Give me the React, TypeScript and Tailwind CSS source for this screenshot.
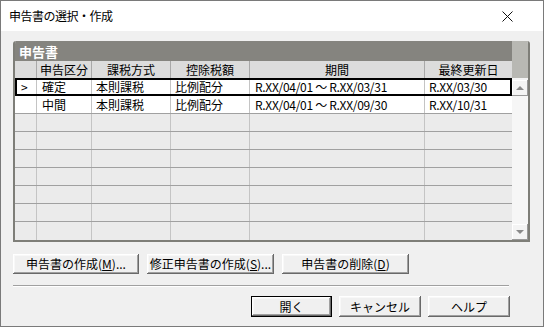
import React from 'react'

const font = { fontFamily: '"Noto Sans CJK JP", "Liberation Sans", sans-serif' }

const cols = 'grid grid-cols-[22px_55px_79px_79px_175px_87px]'

const rows = [
  { mark: '>', kind: '確定', method: '本則課税', deduct: '比例配分', period: 'R.XX/04/01 ～ R.XX/03/31', updated: 'R.XX/03/30', selected: true },
  { mark: '',  kind: '中間', method: '本則課税', deduct: '比例配分', period: 'R.XX/04/01 ～ R.XX/09/30', updated: 'R.XX/10/31', selected: false },
]

const btn =
  'h-full bg-[#f0f0f0] text-[12px] leading-none text-black shadow-[inset_-1px_-1px_#696969,inset_1px_1px_#ffffff,inset_-2px_-2px_#a0a0a0,inset_2px_2px_#f8f8f8]'

function Arrow({ up }: { up?: boolean }) {
  return (
    <div className="w-[16px] h-[16px] bg-[#f4f4f4] shadow-[inset_-1px_-1px_#9a9a9a,inset_1px_1px_#ffffff] flex items-center justify-center">
      <svg width="8" height="4" viewBox="0 0 8 4">
        <polygon points={up ? '0,4 8,4 4,0' : '0,0 8,0 4,4'} fill="#8a8a8a" />
      </svg>
    </div>
  )
}

export default function App() {
  const empty = Array.from({ length: 7 })

  return (
    <div className="w-[544px] h-[327px] border border-[#7a7a7a] bg-[#f0f0f0] flex flex-col" style={font}>
      {/* Title bar */}
      <div className="h-[30px] bg-white flex items-center justify-between pl-[8px] pr-[30px] flex-shrink-0">
        <span className="text-[12px] text-black tracking-[-0.5px]">申告書の選択・作成</span>
        <svg width="11" height="11" viewBox="0 0 11 11" fill="none">
          <path d="M0.5 0.5l10 10M10.5 0.5l-10 10" stroke="#111" strokeWidth="1" />
        </svg>
      </div>

      <div className="flex flex-col pl-[12px] pt-[10px]">
        {/* Grid panel */}
        <div className="w-[517px] h-[201px] flex rounded-t-[3px] overflow-hidden border-l-2 border-b-2 border-r-2 border-[#7e7e78]">
          <div className="w-[497px] flex flex-col">
            <div className="h-[20px] bg-[#85847f] flex items-center pl-[4px]">
              <span className="text-[13px] font-bold text-white leading-none">申告書</span>
            </div>
            <div className={`${cols} h-[17px] bg-[#dcdcdc] text-[12px] leading-[17px] text-black`}>
              {['', '申告区分', '課税方式', '控除税額', '期間', '最終更新日'].map((h, i) => (
                <div key={i} className="border-r border-[#a8a8a8] text-center last:border-r-0">{h}</div>
              ))}
            </div>
            {rows.map((r, i) => (
              <div
                key={i}
                className={`${cols} h-[18px] bg-white text-[12px] leading-[17px] text-black border-b border-[#a0a0a0] ${r.selected ? 'outline-2 outline-black -outline-offset-2' : ''}`}
              >
                <div className="border-r border-[#c4c4c4] pl-[6px]">{r.mark}</div>
                <div className="border-r border-[#c4c4c4] pl-[5px]">{r.kind}</div>
                <div className="border-r border-[#c4c4c4] pl-[4px]">{r.method}</div>
                <div className="border-r border-[#c4c4c4] pl-[4px]">{r.deduct}</div>
                <div className="border-r border-[#c4c4c4] pl-[5px] tracking-[-0.3px]">{r.period}</div>
                <div className="pl-[4px] tracking-[-0.3px]">{r.updated}</div>
              </div>
            ))}
            {empty.map((_, i) => (
              <div key={i} className={`${cols} h-[18px] bg-[#ebebeb] border-b border-[#a0a0a0] last:border-b-0`}>
                <div className="border-r border-[#c4c4c4]" />
                <div className="border-r border-[#c4c4c4]" />
                <div className="border-r border-[#c4c4c4]" />
                <div className="border-r border-[#c4c4c4]" />
                <div className="border-r border-[#c4c4c4]" />
                <div />
              </div>
            ))}
          </div>

          {/* Scrollbar */}
          <div className="w-[16px] flex flex-col">
            <div className="h-[37px] bg-[#b8b8b3]" />
            <div className="h-[2px] bg-[#f4f4f4]" />
            <Arrow up />
            <div className="flex-1 bg-[#f6f6f6]" />
            <Arrow />
          </div>
        </div>

        {/* Action buttons */}
        <div className="flex gap-[8px] mt-[12px] h-[20px]">
          <button className={`${btn} w-[126px]`}>申告書の作成(<u>M</u>)...</button>
          <button className={`${btn} w-[127px]`}>修正申告書の作成(<u>S</u>)...</button>
          <button className={`${btn} w-[127px]`}>申告書の削除(<u>D</u>)</button>
        </div>

        {/* Separator */}
        <div className="w-[496px] mt-[11px] border-t border-[#a0a0a0] border-b border-b-white" />

        {/* Dialog buttons */}
        <div className="flex justify-end gap-[7px] mt-[9px] h-[21px] w-[497px]">
          <button className={`${btn} w-[81px] border border-black`}>開く</button>
          <button className={`${btn} w-[82px]`}>キャンセル</button>
          <button className={`${btn} w-[82px]`}>ヘルプ</button>
        </div>
      </div>
    </div>
  )
}
